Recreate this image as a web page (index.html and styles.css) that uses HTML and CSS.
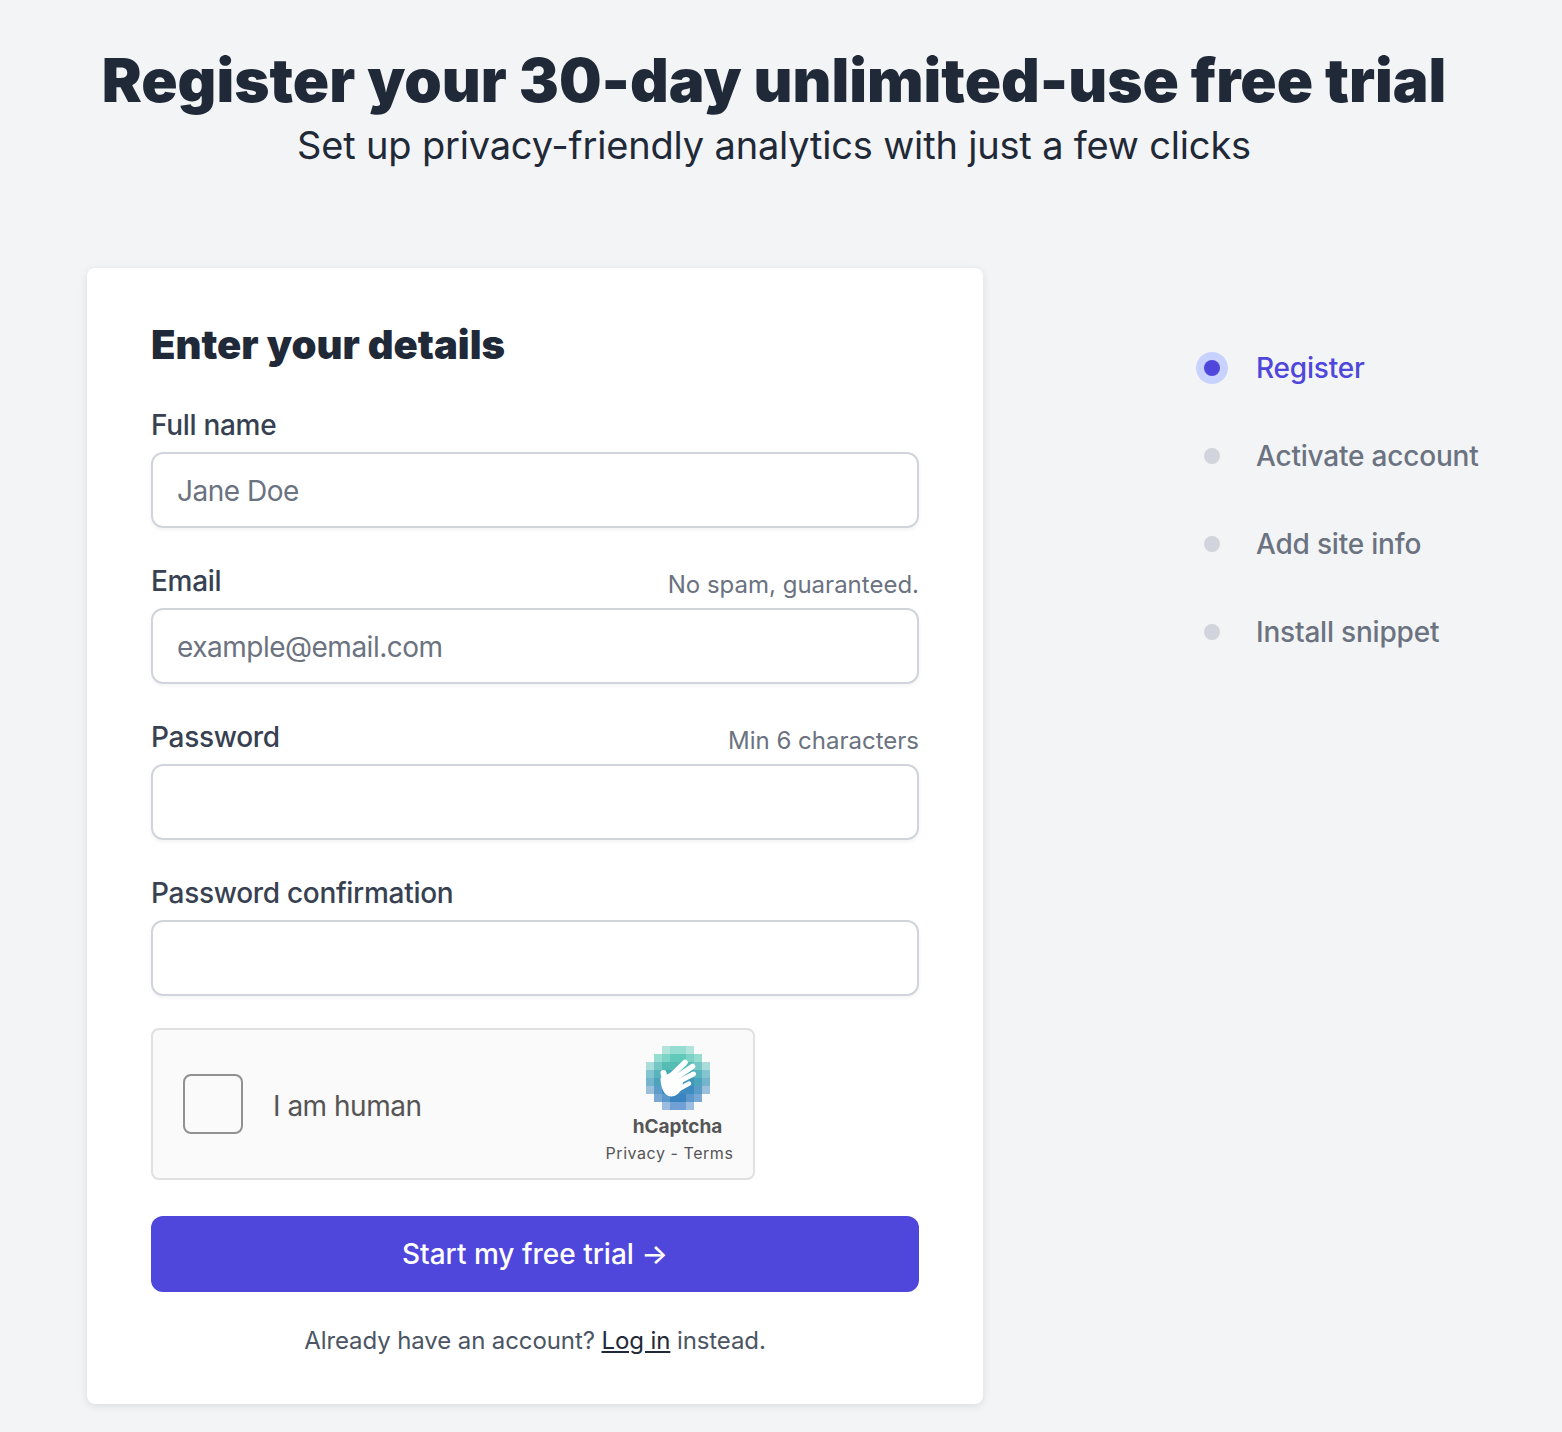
FILE: index.html
```html
<!DOCTYPE html>
<html lang="en">
<head>
    <meta charset="UTF-8">
    <meta name="viewport" content="width=device-width, initial-scale=1.0">
    <title>Register</title>
    <link rel="stylesheet" href="styles.css">
</head>
<body>

<div class="page">
    <h1>Register your 30-day unlimited-use free trial</h1>
    <p class="subtitle">Set up privacy-friendly analytics with just a few clicks</p>

    <div class="content">
        <form class="card">
            <h2>Enter your details</h2>

            <div class="field first">
                <div class="label-row"><label>Full name</label></div>
                <input type="text" placeholder="Jane Doe">
            </div>
            <div class="field">
                <div class="label-row"><label>Email</label><span class="hint">No spam, guaranteed.</span></div>
                <input type="email" placeholder="example@email.com">
            </div>
            <div class="field">
                <div class="label-row"><label>Password</label><span class="hint">Min 6 characters</span></div>
                <input type="password">
            </div>
            <div class="field">
                <div class="label-row"><label>Password confirmation</label></div>
                <input type="password">
            </div>

            <div class="captcha">
                <div class="captcha-check"></div>
                <span class="captcha-text">I am human</span>
                <div class="captcha-brand">
                    <svg class="captcha-logo" width="64" height="64" viewBox="0 0 64 64">
                        <g>
                            <rect x="16" y="0" width="8" height="8" fill="#b2e4dc"/>
                            <rect x="24" y="0" width="16" height="8" fill="#94ddd0"/>
                            <rect x="40" y="0" width="8" height="8" fill="#b2e4dc"/>
                            <rect x="8" y="8" width="8" height="8" fill="#94ddd0"/>
                            <rect x="16" y="8" width="8" height="8" fill="#7dd3c5"/>
                            <rect x="24" y="8" width="16" height="8" fill="#60c9ba"/>
                            <rect x="40" y="8" width="8" height="8" fill="#7dd3c5"/>
                            <rect x="48" y="8" width="8" height="8" fill="#94ddd0"/>
                            <rect x="0" y="16" width="8" height="8" fill="#aadcdc"/>
                            <rect x="8" y="16" width="8" height="8" fill="#74c7c4"/>
                            <rect x="16" y="16" width="32" height="8" fill="#55bdb4"/>
                            <rect x="48" y="16" width="8" height="8" fill="#74c7c4"/>
                            <rect x="56" y="16" width="8" height="8" fill="#aadcdc"/>
                            <rect x="0" y="24" width="8" height="8" fill="#84c4d0"/>
                            <rect x="8" y="24" width="8" height="8" fill="#58b4bc"/>
                            <rect x="16" y="24" width="32" height="8" fill="#46aab4"/>
                            <rect x="48" y="24" width="8" height="8" fill="#58b4bc"/>
                            <rect x="56" y="24" width="8" height="8" fill="#84c4d0"/>
                            <rect x="0" y="32" width="8" height="8" fill="#74b4cc"/>
                            <rect x="8" y="32" width="8" height="8" fill="#4ca4bc"/>
                            <rect x="16" y="32" width="32" height="8" fill="#3f98b8"/>
                            <rect x="48" y="32" width="8" height="8" fill="#4ca4bc"/>
                            <rect x="56" y="32" width="8" height="8" fill="#74b4cc"/>
                            <rect x="0" y="40" width="8" height="8" fill="#9cc0dc"/>
                            <rect x="8" y="40" width="8" height="8" fill="#5c9cc8"/>
                            <rect x="16" y="40" width="32" height="8" fill="#3f8cc0"/>
                            <rect x="48" y="40" width="8" height="8" fill="#5c9cc8"/>
                            <rect x="56" y="40" width="8" height="8" fill="#9cc0dc"/>
                            <rect x="8" y="48" width="8" height="8" fill="#78a8d4"/>
                            <rect x="16" y="48" width="8" height="8" fill="#5c98cc"/>
                            <rect x="24" y="48" width="16" height="8" fill="#3c84c0"/>
                            <rect x="40" y="48" width="8" height="8" fill="#5c98cc"/>
                            <rect x="48" y="48" width="8" height="8" fill="#78a8d4"/>
                            <rect x="16" y="56" width="8" height="8" fill="#9cbce0"/>
                            <rect x="24" y="56" width="16" height="8" fill="#70a0d4"/>
                            <rect x="40" y="56" width="8" height="8" fill="#9cbce0"/>
                        </g>
                        <g fill="none" stroke="#fff" stroke-linecap="round">
                            <path stroke-width="6" d="M17.5 27 L20 38"/>
                            <path stroke-width="5.5" d="M24 31 L39 16.5"/>
                            <path stroke-width="5.5" d="M28 33 L46.5 20.5"/>
                            <path stroke-width="5" d="M32 36 L47.5 28"/>
                            <path stroke-width="4.5" d="M33 43 L43 37.5"/>
                        </g>
                        <path fill="#fff" d="M14.5 32 L26 26 L37 36 L36 43 C33 47 30 50.5 25 50.5 C18.5 50.5 14.5 42 14.5 32 Z"/>
                    </svg>
                    <div class="captcha-name">hCaptcha</div>
                    <div class="captcha-links">Privacy - Terms</div>
                </div>
            </div>

            <button type="button" class="submit">Start my free trial <span class="arrow">→</span></button>
            <p class="login">Already have an account? <a href="#">Log in</a> instead.</p>
        </form>

        <ol class="steps">
            <li class="step active"><span class="dot"></span>Register</li>
            <li class="step"><span class="dot"></span>Activate account</li>
            <li class="step"><span class="dot"></span>Add site info</li>
            <li class="step"><span class="dot"></span>Install snippet</li>
        </ol>
    </div>
</div>

</body>
</html>
```

FILE: styles.css
```css
* {
    box-sizing: border-box;
}
body {
    margin: 0;
    background-color: #f3f4f6;
    font-family: Inter, sans-serif;
    color: #1f2937;
}
.page {
    padding: 48px 101px 28px 87px;
}
h1 {
    margin: 0;
    font-size: 60px;
    line-height: 64px;
    font-weight: 900;
    text-align: center;
    white-space: nowrap;
}
.subtitle {
    margin: 0;
    font-size: 38px;
    line-height: 66px;
    text-align: center;
    letter-spacing: -0.18px;
}
.content {
    display: flex;
    margin-top: 90px;
}
.card {
    flex: none;
    width: 896px;
    padding: 49px 64px 43px;
    background: #fff;
    border-radius: 8px;
    box-shadow: 0 2px 8px rgba(0, 0, 0, 0.1);
}
h2 {
    margin: 0;
    font-size: 40px;
    line-height: 56px;
    font-weight: 900;
}
.field {
    margin-top: 32px;
}
.field.first {
    margin-top: 31px;
}
.label-row {
    display: flex;
    justify-content: space-between;
    align-items: flex-end;
    height: 41px;
    margin-bottom: 7px;
}
label {
    font-size: 28px;
    line-height: 40px;
    font-weight: 500;
    letter-spacing: -0.3px;
    color: #374151;
}
.hint {
    font-size: 24px;
    line-height: 32px;
    color: #6b7280;
}
input {
    display: block;
    width: 100%;
    height: 76px;
    padding: 1px 24px 0;
    font-family: inherit;
    font-size: 28px;
    letter-spacing: -0.5px;
    background: #fff;
    border: 2px solid #d1d5db;
    border-radius: 12px;
    box-shadow: 0 2px 4px rgba(0, 0, 0, 0.05);
}
input::placeholder {
    color: #6b7280;
    opacity: 1;
}
.captcha {
    display: flex;
    align-items: center;
    width: 604px;
    height: 152px;
    margin-top: 32px;
    padding: 0 20px 0 30px;
    background: #fafafa;
    border: 2px solid #e0e0e0;
    border-radius: 8px;
}
.captcha-check {
    width: 60px;
    height: 60px;
    background: #fafafa;
    border: 2px solid #919191;
    border-radius: 8px;
}
.captcha-text {
    margin-left: 30px;
    padding-top: 3px;
    font-size: 28px;
    letter-spacing: -0.5px;
    color: #555;
}
.captcha-brand {
    display: flex;
    flex-direction: column;
    align-items: center;
    margin-left: auto;
    width: 127px;
}
.captcha-logo {
    display: block;
    margin: 1px 0 0 16px;
}
.captcha-name {
    margin: 5px 0 0 16px;
    font-size: 19px;
    line-height: 24px;
    font-weight: 700;
    color: #555;
}
.captcha-links {
    margin-top: 4px;
    font-size: 16px;
    line-height: 20px;
    letter-spacing: 0.55px;
    color: #555;
    white-space: nowrap;
}
.submit {
    display: block;
    width: 100%;
    height: 76px;
    margin-top: 36px;
    font-family: inherit;
    font-size: 28px;
    font-weight: 500;
    color: #fff;
    background: #4f46dc;
    border: none;
    border-radius: 12px;
    cursor: pointer;
}
.login {
    margin: 29px 0 0;
    font-size: 24px;
    line-height: 40px;
    letter-spacing: -0.1px;
    text-align: center;
    color: #4b5563;
}
.login a {
    color: #1f2937;
    text-decoration: underline;
}
.steps {
    flex: none;
    list-style: none;
    margin: 56px 0 0 213px;
    padding: 0;
}
.step {
    display: flex;
    align-items: center;
    height: 88px;
    font-size: 28px;
    font-weight: 500;
    letter-spacing: -0.2px;
    color: #6b7280;
    white-space: nowrap;
}
.dot {
    width: 16px;
    height: 16px;
    margin: 0 36px 0 8px;
    background: #d1d5db;
    border-radius: 50%;
}
.step.active {
    color: #4f46dc;
}
.step.active .dot {
    background: #4f46dc;
    box-shadow: 0 0 0 8px #c7d2fe;
}
```
